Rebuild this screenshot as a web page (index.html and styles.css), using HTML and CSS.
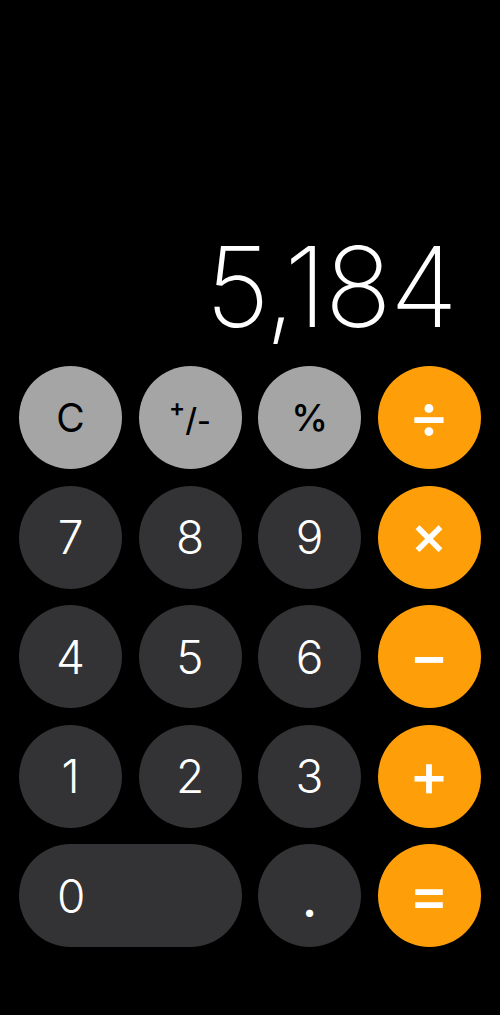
FILE: index.html
```html
<!DOCTYPE html>
<html>
<head>
<meta charset="utf-8">
<link rel="stylesheet" href="styles.css">
</head>
<body>
<div class="calc">
  <div class="display"><span class="value">5,184</span></div>
  <div class="keys">
    <div class="key fn"><span class="fn-txt">C</span></div>
    <div class="key fn"><span class="pm"><span class="pm-plus">+</span><span class="pm-slash">/</span><span class="pm-minus">-</span></span></div>
    <div class="key fn"><span class="fn-txt pct">%</span></div>
    <div class="key op"><span class="op-txt div">÷</span></div>

    <div class="key num">7</div>
    <div class="key num">8</div>
    <div class="key num">9</div>
    <div class="key op"><span class="op-txt mul">×</span></div>

    <div class="key num">4</div>
    <div class="key num">5</div>
    <div class="key num">6</div>
    <div class="key op"><span class="op-txt">−</span></div>

    <div class="key num">1</div>
    <div class="key num">2</div>
    <div class="key num">3</div>
    <div class="key op"><span class="op-txt">+</span></div>

    <div class="key num zero">0</div>
    <div class="key num"><span class="dot">.</span></div>
    <div class="key op"><span class="op-txt">=</span></div>
  </div>
</div>
</body>
</html>
```

FILE: styles.css
```css
html, body {
  margin: 0;
  padding: 0;
  background: #000;
}
body {
  width: 500px;
  height: 1015px;
  overflow: hidden;
  font-family: Inter, "Liberation Sans", sans-serif;
}
.calc {
  display: flex;
  flex-direction: column;
}
.display {
  height: 366px;
  box-sizing: border-box;
  display: flex;
  align-items: flex-end;
  justify-content: flex-end;
  padding: 0 44px 24px 0;
}
.value {
  color: #fff;
  font-family: Inter, sans-serif;
  font-weight: 200;
  font-size: 111px;
  line-height: 111px;
  letter-spacing: -1.8px;
}
.keys {
  display: grid;
  grid-template-columns: repeat(4, 103px);
  grid-auto-rows: 103px;
  column-gap: 16.5px;
  row-gap: 16.5px;
  padding-left: 19px;
}
.key {
  border-radius: 52px;
  display: flex;
  align-items: center;
  justify-content: center;
}
.fn {
  background: #a5a5a5;
  color: #000;
}
.num {
  background: #333234;
  color: #fff;
  font-weight: 300;
  font-size: 46px;
}
.op {
  background: #fe9f0a;
  color: #fff;
}
.zero {
  grid-column: span 2;
  justify-content: flex-start;
  padding-left: 38px;
}
.fn-txt {
  font-size: 39px;
  font-weight: 400;
}
.pct {
  font-size: 37px;
  font-weight: 500;
}
.pm {
  display: inline-flex;
  align-items: center;
  height: 36px;
  font-weight: 500;
  line-height: 1;
}
.pm-plus {
  align-self: flex-start;
  font-size: 24px;
  font-weight: 600;
  margin-top: -4px;
}
.pm-slash {
  font-size: 32px;
  font-weight: 500;
  margin-top: 4px;
}
.pm-minus {
  align-self: flex-end;
  font-size: 30px;
  margin-bottom: 0;
}
.op-txt {
  font-size: 60px;
  font-weight: 500;
  line-height: 1;
  position: relative;
  top: -2px;
}
.op-txt.div {
  font-size: 62px;
}
.op-txt.mul {
  font-size: 56px;
}
.dot {
  font-size: 46px;
  font-weight: 600;
  position: relative;
  top: 4px;
}
```
